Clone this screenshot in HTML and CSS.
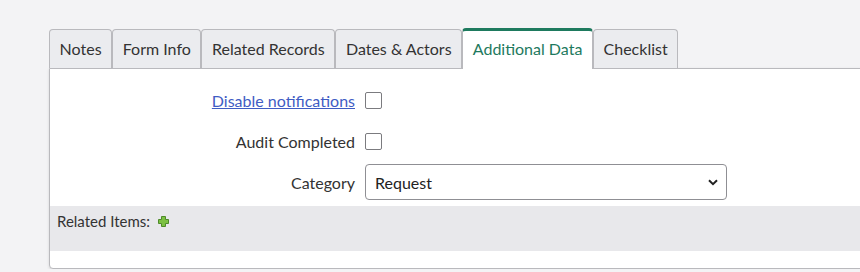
FILE: index.html
```html
<!DOCTYPE html>
<html lang="en">
<head>
    <meta charset="UTF-8">
    <title>Additional Data</title>
    <link rel="stylesheet" href="styles.css">
</head>
<body>
    <div class="record">
        <ul class="tabs">
            <li class="tab">Notes</li>
            <li class="tab">Form Info</li>
            <li class="tab">Related Records</li>
            <li class="tab">Dates &amp; Actors</li>
            <li class="tab active">Additional Data</li>
            <li class="tab">Checklist</li>
        </ul>
        <div class="tab-body">
            <div class="fields">
                <a href="#" class="field-label link">Disable notifications</a>
                <div class="field-value"><input type="checkbox" class="check"></div>

                <label class="field-label">Audit Completed</label>
                <div class="field-value"><input type="checkbox" class="check"></div>

                <label class="field-label">Category</label>
                <div class="field-value">
                    <select class="select">
                        <option>Request</option>
                    </select>
                </div>
            </div>
            <div class="related">
                Related Items:
                <svg class="plus" width="11" height="11" viewBox="0 0 11 11">
                    <path d="M3.5 0.5h4v3h3v4h-3v3h-4v-3h-3v-4h3z" fill="#7cc142" stroke="#4e8a2a" stroke-width="1"/>
                </svg>
            </div>
        </div>
    </div>
</body>
</html>
```

FILE: styles.css
```css
/* Page */
body {
    margin: 0;
    padding: 28px 0 0 49px;
    background: #f3f3f5;
    font-family: Lato, "Open Sans", sans-serif;
    font-size: 16px;
    color: #333;
    overflow: hidden;
}

.record {
    width: 840px;
}

/* Tabs */
.tabs {
    display: flex;
    align-items: flex-start;
    list-style: none;
    margin: 0;
    padding: 0;
    position: relative;
    z-index: 1;
}

.tab {
    height: 38px;
    line-height: 38px;
    padding: 0 9.6px;
    background: #ebecef;
    border: 1px solid #b9b9bd;
    border-bottom: none;
    border-radius: 4px 4px 0 0;
    margin-top: 1px;
}

.tab.active {
    background: #fff;
    color: #1e7a5e;
    border-top: 3px solid #1e7a5e;
    margin: 0 0 -1px;
    line-height: 36px;
}

/* Tab body */
.tab-body {
    background: #fff;
    border: 1px solid #b9b9bd;
    border-radius: 0 0 0 4px;
    box-shadow: 0 1px 3px rgba(0, 0, 0, 0.12);
    padding-bottom: 17px;
}

.fields {
    display: grid;
    grid-template-columns: 305px 1fr;
    column-gap: 10px;
    row-gap: 5px;
    grid-auto-rows: 36px;
    align-items: center;
    padding: 13px 0 6px;
}

.field-label {
    text-align: right;
}

.link {
    color: #3f5cc4;
    text-decoration: underline;
}

.check {
    appearance: none;
    width: 17px;
    height: 17px;
    margin: 0;
    border: 1px solid #7b7b7f;
    border-radius: 2px;
    background: #fff;
    display: block;
}

.select {
    appearance: none;
    width: 362px;
    height: 36px;
    padding: 0 30px 0 9px;
    border: 1px solid #8f8f94;
    border-radius: 4px;
    font-family: inherit;
    font-size: 16px;
    color: #222;
    background: #fff url("data:image/svg+xml;utf8,<svg xmlns='http://www.w3.org/2000/svg' width='10' height='7' viewBox='0 0 10 7'><path d='M1 1.2l4 4 4-4' fill='none' stroke='%23222' stroke-width='2'/></svg>") no-repeat right 8px center;
    display: block;
}

/* Related items */
.related {
    background: #e8e8eb;
    height: 45px;
    padding: 6px 7px 0;
    box-sizing: border-box;
    font-size: 15px;
    display: flex;
    align-items: flex-start;
    gap: 8px;
}

.plus {
    margin-top: 4px;
}
```
